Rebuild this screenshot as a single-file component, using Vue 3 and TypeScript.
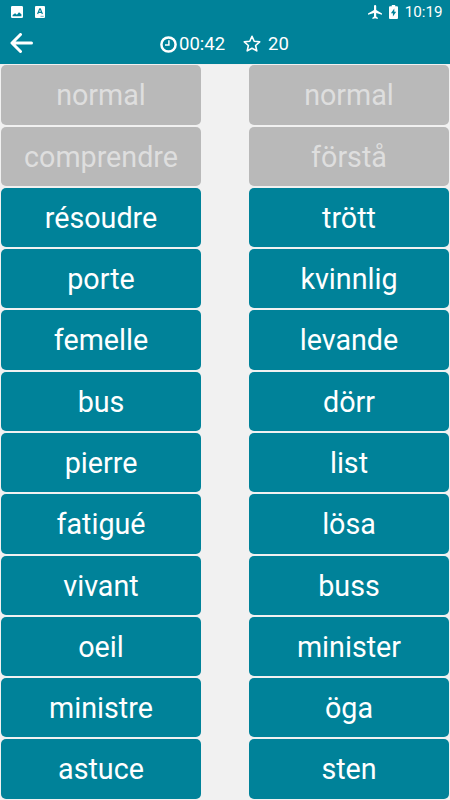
<script setup lang="ts">
interface Pair {
  left: string
  right: string
  matched?: boolean
}

const rows: Pair[] = [
  { left: 'normal', right: 'normal', matched: true },
  { left: 'comprendre', right: 'förstå', matched: true },
  { left: 'résoudre', right: 'trött' },
  { left: 'porte', right: 'kvinnlig' },
  { left: 'femelle', right: 'levande' },
  { left: 'bus', right: 'dörr' },
  { left: 'pierre', right: 'list' },
  { left: 'fatigué', right: 'lösa' },
  { left: 'vivant', right: 'buss' },
  { left: 'oeil', right: 'minister' },
  { left: 'ministre', right: 'öga' },
  { left: 'astuce', right: 'sten' },
]
const elapsed = '00:42'
const score = 20
</script>

<template>
  <div class="screen">
    <header class="header">
      <div class="status">
        <div class="status-left">
          <svg width="12" height="12" viewBox="0 0 12 12">
            <path fill="#fff" fill-rule="evenodd" d="M1.3 0h9.4Q12 0 12 1.3v9.4q0 1.3-1.3 1.3H1.3Q0 12 0 10.7V1.3Q0 0 1.3 0zM1.6 10.200h8.800V8.300L8 6.200 5.900 8.700 4.100 7.200 1.600 9z" />
          </svg>
          <svg width="10" height="12" viewBox="0 0 10 12">
            <rect width="10" height="12" rx="1" fill="#fff" />
            <path d="M2.600 8 4.700 2.800h.6L7.400 8M3.600 6.300h2.800" fill="none" stroke="#008299" stroke-width="1.2" />
            <path d="M5.500 10.300h3.200" stroke="#008299" stroke-width=".6" />
          </svg>
        </div>
        <div class="status-right">
          <svg width="14" height="14" viewBox="0 0 14 14">
            <path fill="#fff" d="M14 9.8V8.4L8.2 4.9V1.1a1.1 1.1 0 0 0-2.2 0v3.8L0 8.4v1.4l6-1.8v3.6l-1.6 1.1V14l2.7-.8 2.7.8v-1.3l-1.6-1.1V8z" />
          </svg>
          <svg class="battery" width="9" height="14" viewBox="0 0 9 14">
            <path fill="#fff" fill-rule="evenodd" d="M2.8 0h3.4v1.3H8q1 0 1 1V13q0 1-1 1H1q-1 0-1-1V2.3q0-1 1-1h1.8zM5.300 3.500 1.900 8.300h2v3.300l3.300-4.900H5.300z" />
          </svg>
          <span class="clock">10:19</span>
        </div>
      </div>
      <div class="toolbar">
        <svg class="back" width="23" height="20" viewBox="0 0 23 20">
          <path d="M10.500 1.500 2 10l8.500 8.500M2.500 10h19" fill="none" stroke="#fff" stroke-width="3" stroke-linecap="round" stroke-linejoin="round" />
        </svg>
        <svg class="timer" width="17" height="17" viewBox="0 0 17 17" fill="none" stroke="#fff">
          <circle cx="8.500" cy="8.500" r="7.100" stroke-width="2.500" />
          <path d="M8.900 4.200v4.900H5" stroke-width="1.500" />
        </svg>
        <span class="time">{{ elapsed }}</span>
        <svg class="star" width="18" height="18" viewBox="0 0 18 18">
          <path d="m9 1.300 2.200 5 5.500.5-4.100 3.700 1.200 5.400L9 13.200l-4.800 2.700 1.200-5.400L1.300 6.800l5.500-.5z" fill="none" stroke="#fff" stroke-width="1.600" stroke-linejoin="round" />
        </svg>
        <span class="score">{{ score }}</span>
      </div>
    </header>
    <main class="board">
      <template v-for="(row, i) in rows" :key="i">
        <button class="card" :class="{ matched: row.matched }">{{ row.left }}</button>
        <button class="card" :class="{ matched: row.matched }">{{ row.right }}</button>
      </template>
    </main>
  </div>
</template>

<style>
body {
  margin: 0;
}
</style>

<style scoped>
.screen {
  width: 450px;
  height: 800px;
  display: flex;
  flex-direction: column;
  overflow: hidden;
  background: #f1f1f1;
  font-family: Roboto, "Liberation Sans", sans-serif;
  color: #fff;
}
.header {
  height: 64.4px;
  flex: none;
  background: #008299;
}
.status {
  height: 24px;
  box-sizing: border-box;
  padding: 0 7.5px 0 11px;
  display: flex;
  justify-content: space-between;
  align-items: center;
}
.status-left {
  display: flex;
  gap: 12px;
  padding-bottom: 1px;
}
.status-right {
  display: flex;
  align-items: center;
}
.battery {
  margin: 0 6.5px 0 7.5px;
}
.clock {
  font-size: 15.2px;
  line-height: 24px;
}
.toolbar {
  height: 40px;
  display: flex;
  align-items: center;
  padding-left: 10px;
  font-size: 18.5px;
}
.back {
  margin-top: -2px;
}
.timer {
  margin-left: 127px;
}
.time {
  margin-left: 2px;
  width: 47px;
}
.star {
  margin-left: 17px;
}
.score {
  margin-left: 7px;
}
.board {
  flex: 1;
  min-height: 0;
  display: grid;
  grid-template-columns: 200px 200px;
  grid-template-rows: repeat(12, 59.27px);
  column-gap: 48px;
  row-gap: 2px;
  padding: 1px 1px 0;
}
.card {
  appearance: none;
  border: 0;
  margin: 0;
  padding: 1px 0 0;
  border-radius: 5px;
  background: #008299;
  color: #fff;
  font: 400 28.7px/58.27px Roboto, "Liberation Sans", sans-serif;
  text-align: center;
}
.card.matched {
  background: #b9b9b9;
  color: #dedede;
}
</style>
